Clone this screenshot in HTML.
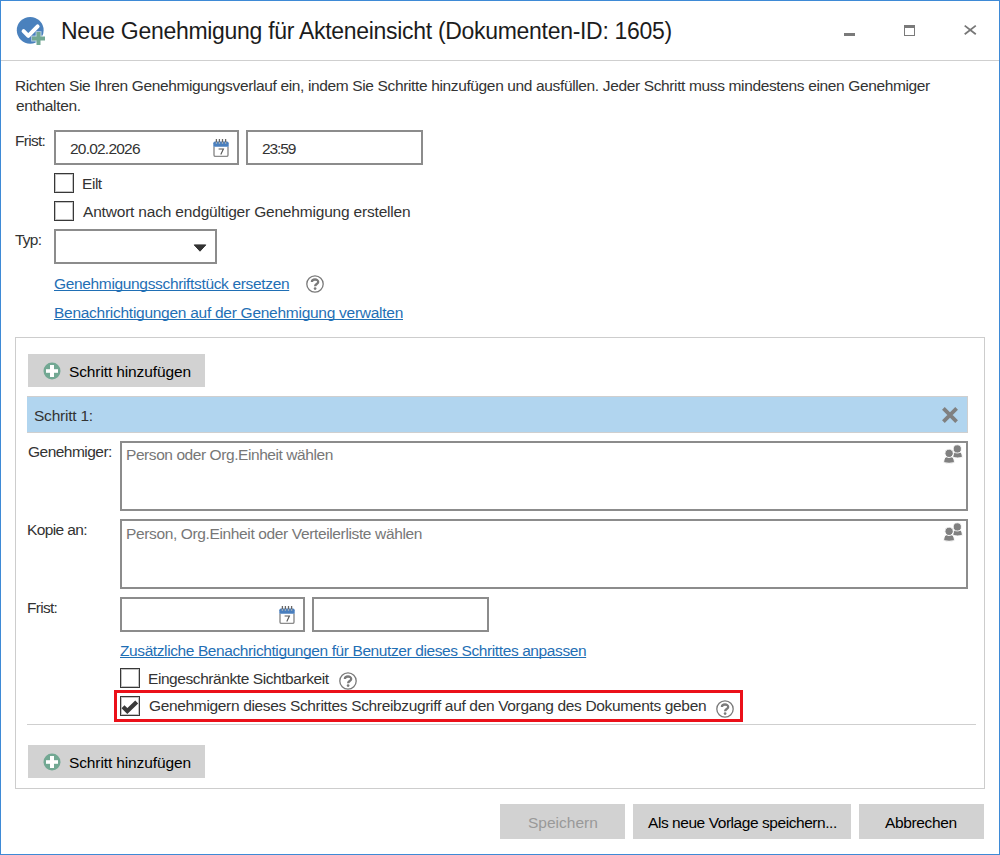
<!DOCTYPE html>
<html><head><meta charset="utf-8">
<style>
*{margin:0;padding:0;box-sizing:border-box}
html,body{width:1000px;height:855px;overflow:hidden;background:#fff}
body{position:relative;font-family:"Liberation Sans",sans-serif;font-size:15.5px;color:#333}
.a{position:absolute}
.t{position:absolute;white-space:pre;line-height:20px;letter-spacing:-0.12px}
.box{position:absolute;border:2px solid #8c8c8c;background:#fff}
.cb{position:absolute;width:20px;height:20px;border:1px solid #383838;box-shadow:inset 0 0 0 1px #c4c4c4;background:#fff}
.lnk{color:#1f6fb5;text-decoration:underline;text-underline-offset:1px;text-decoration-skip-ink:none}
.btn{position:absolute;background:#d2d2d2}
.btxt{position:absolute;white-space:pre;line-height:20px;color:#000;letter-spacing:-0.12px}
</style></head><body>
<!-- window border -->
<div class="a" style="left:0;top:0;width:1000px;height:855px;border:1px solid #3e8ad6"></div>
<!-- title icon -->
<svg class="a" style="left:16px;top:16px" width="30" height="30" viewBox="0 0 30 30">
  <circle cx="14.2" cy="14.3" r="13.4" fill="#4a81bd"/>
  <path d="M7.6 15.2 L12.3 19.9 L21.6 10.4" stroke="#fff" stroke-width="4" fill="none" stroke-linecap="round" stroke-linejoin="round"/>
  <rect x="15.2" y="19.6" width="14.6" height="5.9" fill="#fff" opacity="0.6"/>
  <rect x="19.6" y="15.2" width="5.9" height="14.6" fill="#fff" opacity="0.6"/>
  <rect x="16" y="20.5" width="13" height="4" fill="#72a893"/>
  <rect x="20.5" y="16" width="4" height="13" fill="#72a893"/>
</svg>
<div class="t" style="left:61px;top:18px;font-size:23px;line-height:26px;color:#1c1c1c;letter-spacing:-0.300px">Neue Genehmigung für Akteneinsicht (Dokumenten-ID: 1605)</div>
<!-- window controls -->
<div class="a" style="left:844px;top:33px;width:11px;height:3px;background:#7a7a7a"></div>
<div class="a" style="left:904px;top:25px;width:11px;height:11px;border:1px solid #7a7a7a;border-top:3.5px solid #7a7a7a"></div>
<svg class="a" style="left:962px;top:23px" width="16" height="14" viewBox="0 0 16 14">
  <path d="M2.7 2.6 L13.8 11.3 M13.8 2.6 L2.7 11.3" stroke="#777" stroke-width="1.8" fill="none"/>
</svg>
<div class="a" style="left:1px;top:60px;width:998px;height:1px;background:#cfcfcf"></div>

<div class="t" style="left:15px;top:76px;letter-spacing:-0.361px">Richten Sie Ihren Genehmigungsverlauf ein, indem Sie Schritte hinzufügen und ausfüllen. Jeder Schritt muss mindestens einen Genehmiger</div>
<div class="t" style="left:16px;top:96px;letter-spacing:-0.342px">enthalten.</div>

<div class="t" style="left:15px;top:131px;letter-spacing:-0.720px">Frist:</div>
<div class="box" style="left:54px;top:130px;width:185px;height:35px"></div>
<div class="t" style="left:70px;top:139px;letter-spacing:-0.786px">20.02.2026</div>
<svg class="a cal" style="left:213px;top:139px" width="16" height="18" viewBox="0 0 16 18">
  <path d="M1 7.8 V16 Q1 17.4 2.4 17.4 H13.6 Q15 17.4 15 16 V7.8" fill="#fff" stroke="#8c8c8c" stroke-width="1.4"/>
  <path d="M0.3 7.8 V4.2 Q0.3 2.4 2 2.4 H14 Q15.7 2.4 15.7 4.2 V7.8 Z" fill="#4a7fbe"/>
  <path d="M3.4 0.3 V4 M6.4 0.3 V4 M9.5 0.3 V4 M12.6 0.3 V4" stroke="#666" stroke-width="1.3" stroke-linecap="round"/>
  <path d="M3.4 3.6 V4.6 M6.4 3.6 V4.6 M9.5 3.6 V4.6 M12.6 3.6 V4.6" stroke="#cfdff0" stroke-width="1.3"/>
  <path d="M5.6 10 H10.4 L7.8 15.4" stroke="#555" stroke-width="1.1" fill="none"/>
</svg>
<div class="box" style="left:246px;top:130px;width:177px;height:35px"></div>
<div class="t" style="left:262px;top:139px;letter-spacing:-1.120px">23:59</div>

<div class="cb" style="left:54px;top:173px"></div>
<div class="t" style="left:82px;top:174px;letter-spacing:-0.453px">Eilt</div>
<div class="cb" style="left:54px;top:201px"></div>
<div class="t" style="left:83px;top:202px;letter-spacing:-0.186px">Antwort nach endgültiger Genehmigung erstellen</div>

<div class="t" style="left:15px;top:230px;letter-spacing:-0.786px">Typ:</div>
<div class="box" style="left:54px;top:229px;width:163px;height:35px"></div>
<svg class="a" style="left:193px;top:244px" width="14" height="9" viewBox="0 0 14 9">
  <path d="M1.2 0.9 H12.8 L7 7.2 Z" fill="#333" stroke="#333" stroke-width="1" stroke-linejoin="round"/>
</svg>

<div class="t lnk" style="left:54px;top:274px;letter-spacing:-0.339px">Genehmigungsschriftstück ersetzen</div>
<svg class="a help" style="left:306px;top:275px" width="18" height="18" viewBox="0 0 18 18">
  <circle cx="9" cy="9" r="8.2" fill="none" stroke="#7a7a7a" stroke-width="1.3"/>
  <path d="M5.9 7 C5.9 3.7 12.2 3.7 12.2 6.9 C12.2 9 9.1 9.1 9.1 11.3" fill="none" stroke="#7a7a7a" stroke-width="2.3"/>
  <circle cx="9.1" cy="13.6" r="1.35" fill="#7a7a7a"/>
</svg>
<div class="t lnk" style="left:54px;top:303px;letter-spacing:-0.269px">Benachrichtigungen auf der Genehmigung verwalten</div>

<!-- panel -->
<div class="a" style="left:15px;top:337px;width:970px;height:452px;border:1px solid #cdcdcd"></div>
<div class="btn" style="left:28px;top:354px;width:177px;height:33px"></div>
<svg class="a plus" style="left:43px;top:362px" width="18" height="18" viewBox="0 0 18 18">
  <circle cx="9" cy="9" r="8.5" fill="#72a893"/>
  <rect x="3" y="7.2" width="12" height="3.6" fill="#fff"/>
  <rect x="7" y="3" width="4" height="12" fill="#fff"/>
</svg>
<div class="btxt" style="left:69px;top:362px;letter-spacing:-0.120px">Schritt hinzufügen</div>

<div class="a" style="left:27px;top:396px;width:941px;height:37px;background:#b1d5ef;border-top:1px solid #cfcfcf;border-bottom:1px solid #cfcfcf;border-right:1px solid #cfcfcf"></div>
<div class="t" style="left:34px;top:406px;letter-spacing:-0.231px">Schritt 1:</div>
<svg class="a" style="left:942px;top:407px" width="16" height="16" viewBox="0 0 16 16">
  <path d="M1.4 1.4 L14.6 14.6 M14.6 1.4 L1.4 14.6" stroke="#808080" stroke-width="3.8" fill="none"/>
</svg>

<div class="t" style="left:28px;top:442px;letter-spacing:-0.520px">Genehmiger:</div>
<div class="box" style="left:120px;top:441px;width:848px;height:70px"></div>
<div class="t" style="left:126px;top:445px;color:#777;letter-spacing:-0.429px">Person oder Org.Einheit wählen</div>
<svg class="a ppl" style="left:943px;top:444px" width="22" height="22" viewBox="0 0 22 22">
  <path d="M9.9 13.4 C9.9 9.4 11 7.7 14.6 7.7 C18.2 7.7 19.3 9.4 19.3 13.4 Q14.6 14.5 9.9 13.4 Z" fill="#808080" stroke="#fff" stroke-width="0.9"/>
  <circle cx="14.3" cy="4.9" r="4.1" fill="#808080" stroke="#fff" stroke-width="0.9"/>
  <path d="M0.7 18.7 C0.7 14.5 1.8 12.5 6.05 12.5 C10.3 12.5 11.4 14.5 11.4 18.7 Q6.05 19.9 0.7 18.7 Z" fill="#808080" stroke="#fff" stroke-width="1"/>
  <circle cx="6.1" cy="9.3" r="4.2" fill="#808080" stroke="#fff" stroke-width="1"/>
</svg>

<div class="t" style="left:27px;top:520px;letter-spacing:-0.620px">Kopie an:</div>
<div class="box" style="left:120px;top:519px;width:848px;height:70px"></div>
<div class="t" style="left:126px;top:524px;color:#777;letter-spacing:-0.364px">Person, Org.Einheit oder Verteilerliste wählen</div>
<svg class="a ppl" style="left:943px;top:522px" width="22" height="22" viewBox="0 0 22 22">
  <path d="M9.9 13.4 C9.9 9.4 11 7.7 14.6 7.7 C18.2 7.7 19.3 9.4 19.3 13.4 Q14.6 14.5 9.9 13.4 Z" fill="#808080" stroke="#fff" stroke-width="0.9"/>
  <circle cx="14.3" cy="4.9" r="4.1" fill="#808080" stroke="#fff" stroke-width="0.9"/>
  <path d="M0.7 18.7 C0.7 14.5 1.8 12.5 6.05 12.5 C10.3 12.5 11.4 14.5 11.4 18.7 Q6.05 19.9 0.7 18.7 Z" fill="#808080" stroke="#fff" stroke-width="1"/>
  <circle cx="6.1" cy="9.3" r="4.2" fill="#808080" stroke="#fff" stroke-width="1"/>
</svg>

<div class="t" style="left:27px;top:598px;letter-spacing:-0.720px">Frist:</div>
<div class="box" style="left:120px;top:597px;width:185px;height:35px"></div>
<svg class="a cal" style="left:279px;top:606px" width="16" height="18" viewBox="0 0 16 18">
  <path d="M1 7.8 V16 Q1 17.4 2.4 17.4 H13.6 Q15 17.4 15 16 V7.8" fill="#fff" stroke="#8c8c8c" stroke-width="1.4"/>
  <path d="M0.3 7.8 V4.2 Q0.3 2.4 2 2.4 H14 Q15.7 2.4 15.7 4.2 V7.8 Z" fill="#4a7fbe"/>
  <path d="M3.4 0.3 V4 M6.4 0.3 V4 M9.5 0.3 V4 M12.6 0.3 V4" stroke="#666" stroke-width="1.3" stroke-linecap="round"/>
  <path d="M3.4 3.6 V4.6 M6.4 3.6 V4.6 M9.5 3.6 V4.6 M12.6 3.6 V4.6" stroke="#cfdff0" stroke-width="1.3"/>
  <path d="M5.6 10 H10.4 L7.8 15.4" stroke="#555" stroke-width="1.1" fill="none"/>
</svg>
<div class="box" style="left:312px;top:597px;width:177px;height:35px"></div>

<div class="t lnk" style="left:120px;top:641px;letter-spacing:-0.399px">Zusätzliche Benachrichtigungen für Benutzer dieses Schrittes anpassen</div>
<div class="cb" style="left:120px;top:668px"></div>
<div class="t" style="left:148px;top:669px;letter-spacing:-0.428px">Eingeschränkte Sichtbarkeit</div>
<svg class="a help" style="left:339px;top:672px" width="18" height="18" viewBox="0 0 18 18">
  <circle cx="9" cy="9" r="8.2" fill="none" stroke="#7a7a7a" stroke-width="1.3"/>
  <path d="M5.9 7 C5.9 3.7 12.2 3.7 12.2 6.9 C12.2 9 9.1 9.1 9.1 11.3" fill="none" stroke="#7a7a7a" stroke-width="2.3"/>
  <circle cx="9.1" cy="13.6" r="1.35" fill="#7a7a7a"/>
</svg>

<div class="a" style="left:114px;top:690px;width:629px;height:32px;border:3px solid #eb1019"></div>
<div class="cb" style="left:120px;top:696px"></div>
<svg class="a" style="left:120px;top:696px" width="20" height="20" viewBox="0 0 20 20">
  <path d="M3 10.8 L7.3 15.1 L16.7 5.9" stroke="#3a3a3a" stroke-width="4.2" fill="none"/>
</svg>
<div class="t" style="left:149px;top:696px;letter-spacing:-0.338px">Genehmigern dieses Schrittes Schreibzugriff auf den Vorgang des Dokuments geben</div>
<svg class="a help" style="left:716px;top:700px" width="18" height="18" viewBox="0 0 18 18">
  <circle cx="9" cy="9" r="8.2" fill="none" stroke="#7a7a7a" stroke-width="1.3"/>
  <path d="M5.9 7 C5.9 3.7 12.2 3.7 12.2 6.9 C12.2 9 9.1 9.1 9.1 11.3" fill="none" stroke="#7a7a7a" stroke-width="2.3"/>
  <circle cx="9.1" cy="13.6" r="1.35" fill="#7a7a7a"/>
</svg>

<div class="a" style="left:27px;top:724px;width:949px;height:1px;background:#cfcfcf"></div>

<div class="btn" style="left:28px;top:745px;width:177px;height:33px"></div>
<svg class="a plus" style="left:43px;top:753px" width="18" height="18" viewBox="0 0 18 18">
  <circle cx="9" cy="9" r="8.5" fill="#72a893"/>
  <rect x="3" y="7.2" width="12" height="3.6" fill="#fff"/>
  <rect x="7" y="3" width="4" height="12" fill="#fff"/>
</svg>
<div class="btxt" style="left:69px;top:753px;letter-spacing:-0.120px">Schritt hinzufügen</div>

<!-- bottom buttons -->
<div class="btn" style="left:500px;top:804px;width:125px;height:35px"></div>
<div class="btxt" style="left:528px;top:813px;color:#999;letter-spacing:0.005px">Speichern</div>
<div class="btn" style="left:633px;top:804px;width:218px;height:35px"></div>
<div class="btxt" style="left:648px;top:813px;letter-spacing:-0.441px">Als neue Vorlage speichern...</div>
<div class="btn" style="left:859px;top:804px;width:125px;height:35px"></div>
<div class="btxt" style="left:885px;top:813px;letter-spacing:-0.370px">Abbrechen</div>
</body></html>
